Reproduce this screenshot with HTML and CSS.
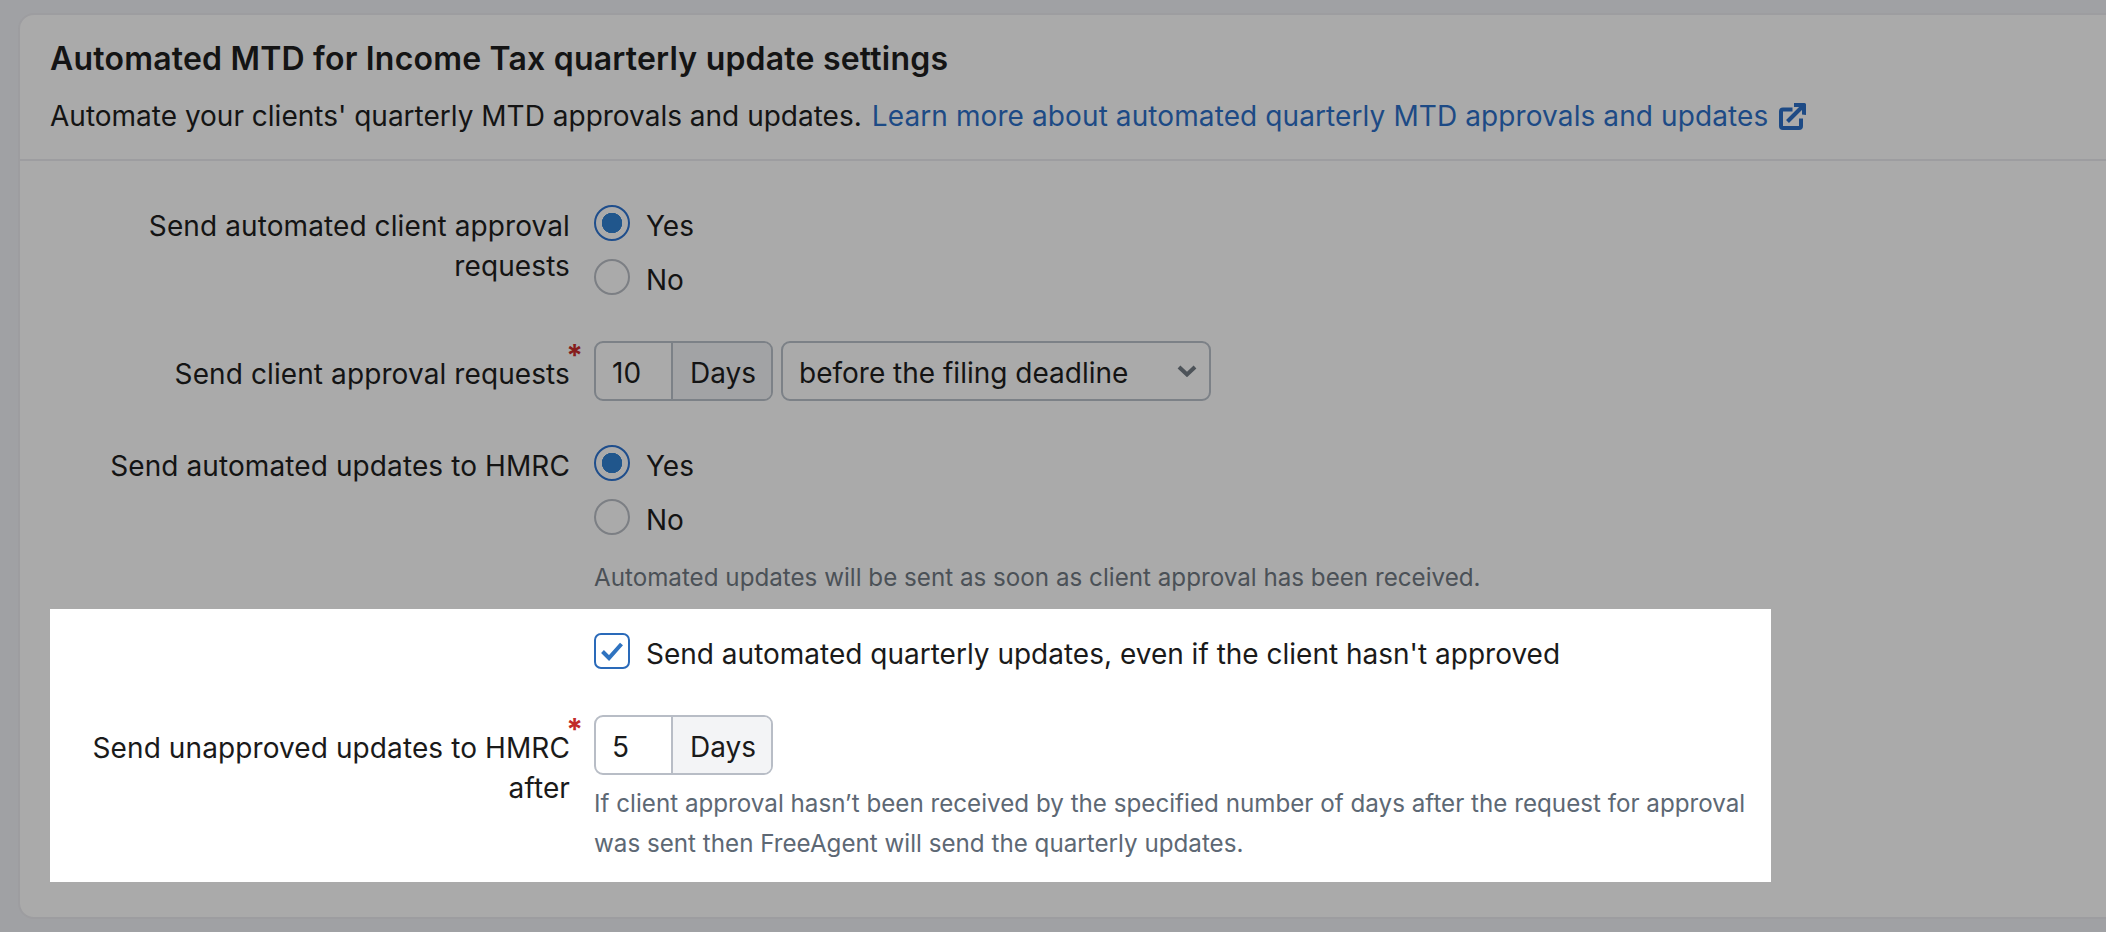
FILE: index.html
```html
<!DOCTYPE html>
<html lang="en">
<head>
  <meta charset="UTF-8">
  <title>Automated MTD settings</title>
  <link rel="stylesheet" href="styles.css">
</head>
<body>
  <section class="card">
    <header class="card-head">
      <h2>Automated MTD for Income Tax quarterly update settings</h2>
      <p>Automate your clients' quarterly MTD approvals and updates. <a href="#">Learn more about automated quarterly MTD approvals and updates</a><svg class="ext" viewBox="0 0 27 27" width="27" height="27"><path d="M13.500 6.500H4a2 2 0 0 0-2 2V23a2 2 0 0 0 2 2h16a2 2 0 0 0 2-2v-7.500" fill="none" stroke="#1d4a85" stroke-width="4"/><path d="M8.500 18.500 23 4" fill="none" stroke="#1d4a85" stroke-width="4"/><path d="M15 0h10.500a1.500 1.500 0 0 1 1.500 1.500V12l-4-.5V4h-8z" fill="#1d4a85"/></svg></p>
    </header>

    <div class="form">
      <div class="row row-first">
        <div class="label">Send automated client approval requests</div>
        <div class="options">
          <div class="option"><span class="radio on"></span><span>Yes</span></div>
          <div class="option"><span class="radio"></span><span>No</span></div>
        </div>
      </div>

      <div class="row row-second">
        <div class="label label-input req">Send client approval requests</div>
        <div class="controls">
          <div class="group">
            <span class="num">10</span><span class="unit">Days</span>
          </div>
          <div class="select">
            <span>before the filing deadline</span>
            <svg viewBox="0 0 20 12" width="20" height="12"><path d="M2 2l8 7.500L18 2" fill="none" stroke="#4d5359" stroke-width="4"/></svg>
          </div>
        </div>
      </div>

      <div class="row row-third">
        <div class="label">Send automated updates to HMRC</div>
        <div>
          <div class="options">
            <div class="option"><span class="radio on"></span><span>Yes</span></div>
            <div class="option"><span class="radio"></span><span>No</span></div>
          </div>
          <p class="help help-third">Automated updates will be sent as soon as client approval has been received.</p>
        </div>
      </div>

      <!-- Highlighted part, not dimmed -->
      <div class="highlight">
        <div class="row">
          <div></div>
          <div class="option">
            <span class="check"><svg viewBox="0 0 24 24" width="24" height="24"><path d="M2.500 12.500 9 19 21.500 5" fill="none" stroke="#2f73c0" stroke-width="4"/></svg></span>
            <span>Send automated quarterly updates, even if the client hasn't approved</span>
          </div>
        </div>
        <div class="row row-days">
          <div class="label label-input req">Send unapproved updates to HMRC after</div>
          <div>
            <div class="group">
              <span class="num">5</span><span class="unit">Days</span>
            </div>
            <p class="help">If client approval hasn’t been received by the specified number of days after the request for approval was sent then FreeAgent will send the quarterly updates.</p>
          </div>
        </div>
      </div>
    </div>
  </section>
</body>
</html>
```

FILE: styles.css
```css
body {
  margin: 0;
  height: 932px;
  overflow: hidden;
  background-color: #a0a1a4;
  color: #141414;
  font-family: Inter, "Liberation Sans", sans-serif;
  font-size: 28px;
  line-height: 40px;
}
.card {
  width: 2140px;
  height: 906px;
  margin: 13px 0 0 18px;
  box-sizing: border-box;
  border: 2px solid #9d9da0;
  border-radius: 16px;
  background-color: #aaaaaa;
}
.card-head {
  height: 146px;
  box-sizing: border-box;
  padding: 24px 30px 0;
  border-bottom: 2px solid #9d9da0;
}
.card-head h2 {
  margin: 0 0 17px;
  font-size: 32px;
  font-weight: 600;
  letter-spacing: 0.2px;
}
.card-head p {
  margin: 0;
  display: flex;
  align-items: center;
}
.card-head a {
  margin-left: 10px;
  color: #1d4a85;
  letter-spacing: 0.1px;
  text-decoration: none;
}
.ext {
  margin-left: 11px;
}
/* Form rows: label column on the left, controls on the right */
.row {
  display: grid;
  grid-template-columns: 550px 1fr;
  column-gap: 24px;
}
.row-first {
  margin-top: 44px;
}
.row-second {
  margin-top: 46px;
}
.row-third {
  margin-top: 44px;
}
.label {
  padding-top: 1px;
  padding-left: 50px;
  letter-spacing: 0.1px;
  text-align: right;
}
.label-input {
  padding-top: 13px;
}
.req {
  position: relative;
}
.req::after {
  content: "*";
  position: absolute;
  top: -6px;
  right: -13px;
  color: #861c1c;
  font-size: 30px;
  font-weight: 700;
}
.options {
  display: flex;
  flex-direction: column;
  gap: 18px;
}
.option {
  display: flex;
  align-items: center;
  gap: 16px;
  height: 36px;
}
.option span:last-child {
  padding-top: 5px;
}
.radio {
  width: 36px;
  height: 36px;
  box-sizing: border-box;
  border: 2px solid #7c7f84;
  border-radius: 50%;
}
.radio.on {
  border-color: #1f4e8c;
  background: radial-gradient(circle, #20568c 10px, transparent 10.500px);
}
.controls {
  display: flex;
  gap: 8px;
}
.group {
  display: flex;
  width: 179px;
  height: 60px;
  box-sizing: border-box;
  border: 2px solid #7c8187;
  border-radius: 9px;
  line-height: 60px;
  overflow: hidden;
}
.num {
  width: 77px;
  padding-left: 16px;
  box-sizing: border-box;
  border-right: 2px solid #7c8187;
}
.unit {
  flex: 1;
  padding-left: 17px;
  background-color: #a2a3a5;
}
.select {
  display: flex;
  justify-content: space-between;
  align-items: center;
  width: 430px;
  height: 60px;
  box-sizing: border-box;
  padding: 0 12px 0 16px;
  border: 2px solid #7c8187;
  border-radius: 9px;
}
.select span {
  padding-top: 4px;
}
.help {
  margin: 0;
  color: #4b5157;
  font-size: 24.200px;
}
.help-third {
  margin-top: 23px;
}
.highlight {
  width: 1721px;
  height: 273px;
  box-sizing: border-box;
  margin: 11px 0 0 30px;
  padding-top: 24px;
  background-color: #fff;
  color: #1a1a1a;
}
.highlight .row {
  grid-template-columns: 520px 1fr;
}
.highlight .label {
  padding-left: 20px;
}
.highlight .row-days {
  margin-top: 46px;
}
.highlight .group {
  border-color: #b8bdc6;
}
.highlight .num {
  border-color: #b8bdc6;
}
.highlight .unit {
  background-color: #f3f4f6;
}
.highlight .help {
  margin-top: 9px;
  color: #5d6874;
}
.highlight .req::after {
  color: #c12a2a;
}
.check {
  display: flex;
  align-items: center;
  justify-content: center;
  width: 36px;
  height: 36px;
  box-sizing: border-box;
  border: 2px solid #2a6ab9;
  border-radius: 7px;
}
```
